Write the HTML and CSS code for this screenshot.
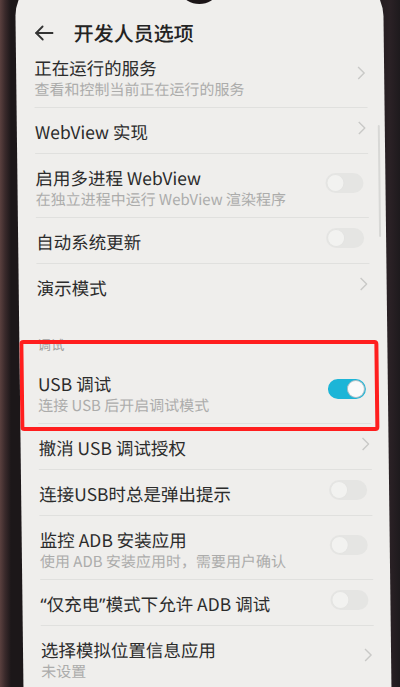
FILE: index.html
```html
<!DOCTYPE html>
<html>
<head lang="zh-CN">
    <meta charset="UTF-8">
    <title>开发人员选项</title>
    <link rel="stylesheet" href="styles.css">
</head>
<body>
    <div class="phone">
        <div class="screen">
            <div class="notch"></div>
            <div class="scrollbar"></div>

            <div class="topbar">
                <svg class="back" width="20" height="16" viewBox="0 0 20 16">
                    <polyline points="9,1.5 2.5,8 9,14.5" fill="none" stroke="#333" stroke-width="1.8" stroke-linecap="round" stroke-linejoin="round"/>
                    <line x1="2.5" y1="8" x2="19" y2="8" stroke="#333" stroke-width="1.8" stroke-linecap="round"/>
                </svg>
                <h1>开发人员选项</h1>
            </div>

            <ul class="list">
                <li class="item two">
                    <div class="text">
                        <p class="title">正在运行的服务</p>
                        <p class="sub">查看和控制当前正在运行的服务</p>
                    </div>
                    <svg class="arrow" width="8" height="14" viewBox="0 0 8 14"><polyline points="1,1 7,7 1,13" fill="none" stroke="#c9c9c7" stroke-width="1.4"/></svg>
                </li>
                <li class="item">
                    <div class="text"><p class="title">WebView 实现</p></div>
                    <svg class="arrow" width="8" height="14" viewBox="0 0 8 14"><polyline points="1,1 7,7 1,13" fill="none" stroke="#c9c9c7" stroke-width="1.4"/></svg>
                </li>
                <li class="item two">
                    <div class="text">
                        <p class="title">启用多进程 WebView</p>
                        <p class="sub">在独立进程中运行 WebView 渲染程序</p>
                    </div>
                    <span class="switch"></span>
                </li>
                <li class="item">
                    <div class="text"><p class="title">自动系统更新</p></div>
                    <span class="switch"></span>
                </li>
                <li class="item last">
                    <div class="text"><p class="title">演示模式</p></div>
                    <svg class="arrow" width="8" height="14" viewBox="0 0 8 14"><polyline points="1,1 7,7 1,13" fill="none" stroke="#c9c9c7" stroke-width="1.4"/></svg>
                </li>
            </ul>

            <div class="section">调试</div>

            <ul class="list">
                <li class="item two usb">
                    <div class="text">
                        <p class="title">USB 调试</p>
                        <p class="sub">连接 USB 后开启调试模式</p>
                    </div>
                    <span class="switch on"></span>
                    <span class="mark"></span>
                </li>
                <li class="item">
                    <div class="text"><p class="title">撤消 USB 调试授权</p></div>
                    <svg class="arrow" width="8" height="14" viewBox="0 0 8 14"><polyline points="1,1 7,7 1,13" fill="none" stroke="#c9c9c7" stroke-width="1.4"/></svg>
                </li>
                <li class="item">
                    <div class="text"><p class="title">连接USB时总是弹出提示</p></div>
                    <span class="switch"></span>
                </li>
                <li class="item two">
                    <div class="text">
                        <p class="title">监控 ADB 安装应用</p>
                        <p class="sub">使用 ADB 安装应用时，需要用户确认</p>
                    </div>
                    <span class="switch"></span>
                </li>
                <li class="item">
                    <div class="text"><p class="title"><span class="q">“</span>仅充电<span class="q">”</span>模式下允许 ADB 调试</p></div>
                    <span class="switch"></span>
                </li>
                <li class="item two">
                    <div class="text">
                        <p class="title">选择模拟位置信息应用</p>
                        <p class="sub">未设置</p>
                    </div>
                    <svg class="arrow" width="8" height="14" viewBox="0 0 8 14"><polyline points="1,1 7,7 1,13" fill="none" stroke="#c9c9c7" stroke-width="1.4"/></svg>
                </li>
            </ul>
        </div>
    </div>
</body>
</html>
```

FILE: styles.css
```css
* {
    margin: 0;
    padding: 0;
}
html,body {
    height: 100%;
}
body {
    overflow: hidden;
    background: linear-gradient(90deg, #5a403e 0, #3a2a2b 5px, #1c1719 11px, #1c1719 360px, #2a2125 390px, #1e1a1d 400px);
    font-family: "Noto Sans CJK SC", "Noto Sans", sans-serif;
    color: #2b2b2b;
}
.phone {
    height: 100%;
    padding-left: 15px;
}
.screen {
    position: relative;
    width: 368px;
    height: 740px;
    margin-top: -24px;
    padding-top: 24px;
    box-sizing: border-box;
    background: #efeeec;
    border-radius: 40px 40px 0 0;
    transform: skewX(0.68deg);
    transform-origin: 0 0;
    overflow: hidden;
}
.notch {
    position: absolute;
    top: 8px;
    left: 168px;
    width: 32px;
    height: 20px;
    border-radius: 50%;
    background: #1b1517;
}
.scrollbar {
    position: absolute;
    top: 149px;
    right: 5px;
    width: 2.5px;
    height: 112px;
    border-radius: 2px;
    background: #d8d8d6;
}

/* 顶部标题栏 */
.topbar {
    display: flex;
    align-items: center;
    height: 22px;
    padding: 22px 0 0 18px;
}
.topbar .back {
    display: block;
}
.topbar h1 {
    margin-left: 20px;
    font-size: 20px;
    line-height: 22px;
    font-weight: 500;
    color: #232323;
}

/* 列表 */
.list {
    list-style: none;
}
.item {
    position: relative;
    display: flex;
    align-items: center;
    height: 46px;
    margin: 0 17px 0 18px;
    box-sizing: border-box;
    border-bottom: 1px solid #e0e0de;
}
.item.two {
    height: 64px;
}
.item.last {
    border-bottom: none;
}
.text {
    flex: 1;
    padding-top: 2px;
}
.item.two .text {
    padding-top: 5px;
}
.title {
    font-size: 17.5px;
    line-height: 22px;
    white-space: nowrap;
}
.title .q {
    font-family: "Noto Sans", sans-serif;
}
.sub {
    font-size: 15px;
    line-height: 20px;
    color: #acacab;
    white-space: nowrap;
}
.arrow {
    display: block;
    margin: 0 2px 6px 0;
}

/* 开关 */
.switch {
    position: relative;
    width: 38px;
    height: 20px;
    margin: 0 5px 5px 0;
    border-radius: 10px;
    background: #e5e5e3;
}
.switch::after {
    content: "";
    position: absolute;
    top: 1px;
    left: 1px;
    width: 16px;
    height: 16px;
    border-radius: 50%;
    background: #f2f2f0;
    border: 1px solid #e3e3e1;
}
.switch.on {
    background: #1db5d7;
}
.switch.on::after {
    left: auto;
    right: 1px;
    background: #fafafa;
    border-color: #a9bcc4;
}

.section {
    margin: 0 18px;
    padding: 25px 0 7px;
    font-size: 13.5px;
    line-height: 18px;
    color: #a2a2a1;
}

/* 红框标注 */
.mark {
    position: absolute;
    top: -20px;
    bottom: -8px;
    left: -18px;
    right: -8px;
    border: 4px solid #ff1e1e;
    border-radius: 4px;
}
```
